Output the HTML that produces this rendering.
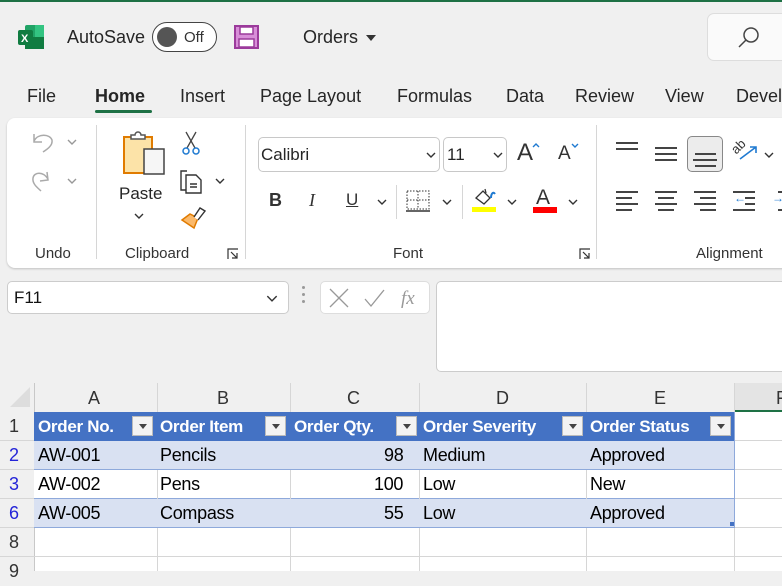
<!DOCTYPE html>
<html><head><meta charset="utf-8"><style>
*{margin:0;padding:0;box-sizing:border-box}
body{width:782px;height:571px;overflow:hidden;background:#f0f0f0;font-family:"Liberation Sans",sans-serif;color:#242424;position:relative}
.a{position:absolute;white-space:nowrap}
.t{font-size:18px;color:#262626}
.sm{font-size:15px;color:#333}
.cv{position:absolute}
.cell{position:absolute;font-size:18px;line-height:29px;color:#000;white-space:nowrap;letter-spacing:-0.3px}
.hd{position:absolute;font-size:17px;font-weight:bold;color:#fff;line-height:29px;white-space:nowrap;letter-spacing:-0.3px}
.dd{position:absolute;width:21px;height:20px;background:#f3f3f3;border:1px solid #bbb;top:416px}
.dd:after{content:"";position:absolute;left:6px;top:7px;border-left:4px solid transparent;border-right:4px solid transparent;border-top:5px solid #444}
.vl{position:absolute;width:1px;background:#d6d6d6}
.hl{position:absolute;height:1px;background:#d6d6d6}
.ln{position:absolute;height:2px;background:#444}
</style></head><body>
<svg width="0" height="0" style="position:absolute"><defs><symbol id="ch" viewBox="0 0 10 6"><path d="M1 1 L5 5 L9 1" fill="none" stroke="#333" stroke-width="1.4"/></symbol></defs></svg>
<div class="a" style="left:0;top:0;width:782px;height:2px;background:#1e7145"></div>
<svg class="a" style="left:18px;top:25px" width="26" height="24"><rect x="7" y="0" width="19" height="24" rx="2" fill="#21a366"/><rect x="7" y="12" width="19" height="12" fill="#107c41"/><rect x="17" y="0" width="9" height="12" fill="#33c481"/><rect x="0" y="5" width="15" height="15" rx="2" fill="#107c41"/><text x="3" y="17" font-size="11" font-weight="bold" fill="#fff" font-family="Liberation Sans">X</text></svg>
<div class="a t" style="left:67px;top:27px">AutoSave</div>
<div class="a" style="left:152px;top:22px;width:65px;height:30px;border:1.5px solid #444;border-radius:15px;background:#fff"></div>
<div class="a" style="left:157px;top:27px;width:20px;height:20px;border-radius:50%;background:#555"></div>
<div class="a sm" style="left:184px;top:29px">Off</div>
<svg class="a" style="left:234px;top:25px" width="25" height="24"><rect x="1" y="1" width="23" height="22" fill="#d88ed8" stroke="#9b3a9b" stroke-width="2"/><rect x="6" y="2" width="13" height="7" fill="#fff" stroke="#9b3a9b" stroke-width="1.5"/><rect x="5" y="14" width="15" height="8" fill="#fff" stroke="#9b3a9b" stroke-width="1.5"/></svg>
<div class="a t" style="left:303px;top:27px">Orders</div>
<div class="a" style="left:366px;top:35px;border-left:5px solid transparent;border-right:5px solid transparent;border-top:6px solid #333"></div>
<div class="a" style="left:707px;top:13px;width:90px;height:48px;background:#fafafa;border:1px solid #ddd;border-radius:7px"></div>
<svg class="a" style="left:738px;top:26px" width="22" height="22"><circle cx="13" cy="9" r="7" fill="none" stroke="#444" stroke-width="1.5"/><line x1="8" y1="14" x2="1" y2="21" stroke="#444" stroke-width="1.5"/></svg>
<div class="a t" style="left:27px;top:86px">File</div>
<div class="a t" style="left:95px;top:86px;font-weight:bold">Home</div>
<div class="a" style="left:95px;top:110px;width:57px;height:3px;background:#1e7145;border-radius:2px"></div>
<div class="a t" style="left:180px;top:86px">Insert</div>
<div class="a t" style="left:260px;top:86px">Page Layout</div>
<div class="a t" style="left:397px;top:86px">Formulas</div>
<div class="a t" style="left:506px;top:86px">Data</div>
<div class="a t" style="left:575px;top:86px">Review</div>
<div class="a t" style="left:665px;top:86px">View</div>
<div class="a t" style="left:736px;top:86px">Devel</div>
<div class="a" style="left:7px;top:118px;width:800px;height:150px;background:#fff;border-radius:8px;box-shadow:0 1px 2px rgba(0,0,0,.2)"></div>
<div class="vl" style="left:96px;top:125px;height:134px"></div>
<div class="vl" style="left:245px;top:125px;height:134px"></div>
<div class="vl" style="left:596px;top:125px;height:134px"></div>
<svg class="a" style="left:30px;top:128px" width="30" height="65" fill="none" stroke="#aaa" stroke-width="1.5"><path d="M4 6 L4 14 L12 14 M4 13 C8 5 20 6 22 12 C23 18 16 22 13 24"/><path d="M17 44 L18 52 L10 53 M18 51 C13 43 4 44 3 50 C2 56 8 60 11 63"/></svg>
<svg class="cv" style="left:67px;top:139px" width="10" height="6"><use href="#ch" style="opacity:.5"/></svg>
<svg class="cv" style="left:67px;top:178px" width="10" height="6"><use href="#ch" style="opacity:.5"/></svg>
<div class="a sm" style="left:35px;top:245px">Undo</div>
<svg class="a" style="left:121px;top:130px" width="46" height="46"><rect x="3" y="7" width="28" height="36" fill="#fce3a8" stroke="#e07b00" stroke-width="2"/><path d="M10 9 V5 H14 A3 3 0 0 1 20 5 H24 V9 Z" fill="#fff" stroke="#555" stroke-width="1.5"/><rect x="23" y="19" width="20" height="25" fill="#f6f6f6" stroke="#444" stroke-width="1.5"/></svg>
<div class="a t" style="left:119px;top:184px;font-size:17px">Paste</div>
<svg class="cv" style="left:134px;top:213px" width="10" height="6"><use href="#ch"/></svg>
<svg class="a" style="left:181px;top:131px" width="22" height="24" fill="none"><path d="M5 1 L14 17 M15 1 L6 17" stroke="#444" stroke-width="1.3"/><circle cx="5" cy="20" r="3" stroke="#1f7ad1" stroke-width="1.5"/><circle cx="15" cy="20" r="3" stroke="#1f7ad1" stroke-width="1.5"/></svg>
<svg class="a" style="left:179px;top:168px" width="26" height="26" fill="none" stroke="#333" stroke-width="1.4"><path d="M8 3 H2 V22 H7"/><path d="M7 7 H17 L22 12 V25 H7 Z"/><path d="M11 16 H18 M11 19 H18"/></svg>
<svg class="cv" style="left:215px;top:178px" width="10" height="6"><use href="#ch"/></svg>
<svg class="a" style="left:180px;top:206px" width="26" height="26"><path d="M2 14 L14 22 L18 12 L10 8 Z" fill="#fbb96a" stroke="#e07b00" stroke-width="1.5"/><path d="M14 11 L20 2 L25 5 L18 14" fill="#fff" stroke="#333" stroke-width="1.4"/></svg>
<div class="a sm" style="left:125px;top:245px">Clipboard</div>
<svg class="a" style="left:227px;top:248px" width="12" height="12" fill="none" stroke="#333" stroke-width="1.2"><path d="M1 11 V1 H11 M4 4 L10 10 M10 5 V10 H5"/></svg>
<div class="a" style="left:258px;top:137px;width:182px;height:35px;border:1px solid #c8c8c8;border-radius:5px"></div>
<div class="a t" style="left:261px;top:145px;font-size:17px">Calibri</div>
<svg class="cv" style="left:426px;top:152px" width="10" height="6"><use href="#ch"/></svg>
<div class="a" style="left:443px;top:137px;width:64px;height:35px;border:1px solid #c8c8c8;border-radius:5px"></div>
<div class="a t" style="left:447px;top:145px;font-size:17px">11</div>
<svg class="cv" style="left:493px;top:152px" width="10" height="6"><use href="#ch"/></svg>
<div class="a" style="left:517px;top:139px;font-size:24px;color:#333">A</div>
<svg class="cv" style="left:532px;top:143px" width="8" height="5"><path d="M1 4 L4 1 L7 4" fill="none" stroke="#1f7ad1" stroke-width="1.4"/></svg>
<div class="a" style="left:558px;top:143px;font-size:19px;color:#333">A</div>
<svg class="cv" style="left:571px;top:143px" width="8" height="5"><path d="M1 1 L4 4 L7 1" fill="none" stroke="#1f7ad1" stroke-width="1.4"/></svg>
<div class="a" style="left:269px;top:190px;font-size:18px;font-weight:bold;color:#333">B</div>
<div class="a" style="left:309px;top:190px;font-size:18px;font-style:italic;font-family:'Liberation Serif';color:#333">I</div>
<div class="a" style="left:346px;top:190px;font-size:17px;text-decoration:underline;color:#333">U</div>
<svg class="cv" style="left:377px;top:199px" width="10" height="6"><use href="#ch"/></svg>
<div class="vl" style="left:396px;top:185px;height:34px"></div>
<svg class="a" style="left:406px;top:190px" width="24" height="22" fill="none" stroke="#333" stroke-width="1" stroke-dasharray="1.5 1.5"><rect x="1" y="1" width="22" height="18"/><path d="M12 1 V19 M1 10 H23"/><path d="M0 21 H24" stroke-dasharray="none" stroke-width="1.5"/></svg>
<svg class="cv" style="left:442px;top:199px" width="10" height="6"><use href="#ch"/></svg>
<div class="vl" style="left:462px;top:185px;height:34px"></div>
<svg class="a" style="left:471px;top:188px" width="26" height="18" fill="none" stroke="#333" stroke-width="1.3"><path d="M5 10 L12 3 L19 10 L13 16 Z"/><path d="M14 1 L15 5"/><path d="M20 10 C20 6 22 3 24 6" stroke="#1f7ad1" stroke-width="2"/></svg>
<div class="a" style="left:472px;top:207px;width:24px;height:5px;background:#ffff00"></div>
<svg class="cv" style="left:507px;top:199px" width="10" height="6"><use href="#ch"/></svg>
<div class="a" style="left:536px;top:186px;font-size:21px;color:#333">A</div>
<div class="a" style="left:533px;top:207px;width:24px;height:6px;background:#f00"></div>
<svg class="cv" style="left:568px;top:199px" width="10" height="6"><use href="#ch"/></svg>
<div class="a sm" style="left:393px;top:245px">Font</div>
<svg class="a" style="left:579px;top:248px" width="12" height="12" fill="none" stroke="#333" stroke-width="1.2"><path d="M1 11 V1 H11 M4 4 L10 10 M10 5 V10 H5"/></svg>
<div class="ln" style="left:616px;top:142px;width:22px;height:1.5px"></div><div class="ln" style="left:616px;top:148px;width:22px;height:1.5px"></div>
<div class="ln" style="left:655px;top:147px;width:22px;height:1.5px"></div><div class="ln" style="left:655px;top:153px;width:22px;height:1.5px"></div><div class="ln" style="left:655px;top:159px;width:22px;height:1.5px"></div>
<div class="a" style="left:687px;top:136px;width:36px;height:36px;background:#ececec;border:1px solid #888;border-radius:5px"></div>
<div class="ln" style="left:695px;top:153px;width:21px;height:1.5px"></div><div class="ln" style="left:693px;top:159px;width:24px;height:1.5px"></div><div class="ln" style="left:695px;top:165px;width:21px;height:1.5px"></div>
<div class="a" style="left:731px;top:139px;font-size:13px;color:#333;transform:rotate(-45deg)">ab</div>
<svg class="a" style="left:738px;top:145px" width="20" height="16"><path d="M2 14 L18 2 M12 2 H18 V8" fill="none" stroke="#1f7ad1" stroke-width="1.6"/></svg>
<svg class="cv" style="left:764px;top:152px" width="10" height="6"><use href="#ch"/></svg>
<div class="ln" style="left:616px;top:191px;width:22px;height:1.5px"></div><div class="ln" style="left:616px;top:197px;width:16px;height:1.5px"></div><div class="ln" style="left:616px;top:203px;width:22px;height:1.5px"></div><div class="ln" style="left:616px;top:209px;width:16px;height:1.5px"></div>
<div class="ln" style="left:655px;top:191px;width:22px;height:1.5px"></div><div class="ln" style="left:658px;top:197px;width:16px;height:1.5px"></div><div class="ln" style="left:655px;top:203px;width:22px;height:1.5px"></div><div class="ln" style="left:658px;top:209px;width:16px;height:1.5px"></div>
<div class="ln" style="left:694px;top:191px;width:22px;height:1.5px"></div><div class="ln" style="left:700px;top:197px;width:16px;height:1.5px"></div><div class="ln" style="left:694px;top:203px;width:22px;height:1.5px"></div><div class="ln" style="left:700px;top:209px;width:16px;height:1.5px"></div>
<div class="ln" style="left:733px;top:191px;width:22px;height:1.5px"></div><div class="ln" style="left:745px;top:197px;width:10px;height:1.5px"></div><div class="ln" style="left:745px;top:203px;width:10px;height:1.5px"></div><div class="ln" style="left:733px;top:209px;width:22px;height:1.5px"></div>
<div class="a" style="left:734px;top:191px;font-size:12px;color:#1f7ad1">←</div>
<div class="a" style="left:772px;top:191px;font-size:12px;color:#1f7ad1">→</div>
<div class="ln" style="left:778px;top:191px;width:10px;height:1.5px"></div><div class="ln" style="left:778px;top:209px;width:10px;height:1.5px"></div>
<div class="a sm" style="left:696px;top:245px">Alignment</div>
<div class="a" style="left:7px;top:281px;width:282px;height:33px;background:#fff;border:1px solid #ccc;border-radius:5px"></div>
<div class="a t" style="left:14px;top:288px;font-size:17px;color:#111">F11</div>
<svg class="cv" style="left:266px;top:295px" width="12" height="7" viewBox="0 0 10 6"><path d="M1 1 L5 5 L9 1" fill="none" stroke="#333" stroke-width="1.2"/></svg>
<div class="a" style="left:302px;top:286px;width:3px;height:3px;background:#999;border-radius:50%"></div>
<div class="a" style="left:302px;top:293px;width:3px;height:3px;background:#999;border-radius:50%"></div>
<div class="a" style="left:302px;top:300px;width:3px;height:3px;background:#999;border-radius:50%"></div>
<div class="a" style="left:320px;top:281px;width:110px;height:33px;background:#fff;border:1px solid #ddd;border-radius:5px"></div>
<svg class="a" style="left:328px;top:287px" width="95" height="22" fill="none" stroke="#999" stroke-width="1.3"><path d="M2 2 L20 20 M20 2 L2 20"/><path d="M37 12 L43 19 L56 3"/><text x="73" y="17" font-size="19" font-style="italic" font-family="Liberation Serif" fill="#999" stroke="none">fx</text></svg>
<div class="a" style="left:436px;top:281px;width:360px;height:91px;background:#fff;border:1px solid #ccc;border-radius:5px"></div>
<div class="a" style="left:0;top:383px;width:782px;height:188px;background:#fff"></div>
<div class="a" style="left:0;top:383px;width:782px;height:29px;background:#f0f0f0"></div>
<div class="a" style="left:0;top:412px;width:34px;height:159px;background:#f0f0f0"></div>
<div class="a" style="left:10px;top:387px;border-left:20px solid transparent;border-bottom:20px solid #ddd"></div>
<div class="a" style="left:734px;top:383px;width:48px;height:29px;background:#e4e4e4;border-bottom:2px solid #1e7145"></div>
<div class="a" style="left:0;top:388px;width:782px;font-size:18px;color:#333">
<span class="a" style="left:88px">A</span><span class="a" style="left:217px">B</span><span class="a" style="left:347px">C</span><span class="a" style="left:496px">D</span><span class="a" style="left:654px">E</span><span class="a" style="left:776px">F</span></div>
<div class="vl" style="left:34px;top:383px;height:188px;background:#c8c8c8"></div>
<div class="vl" style="left:157px;top:383px;height:188px"></div>
<div class="vl" style="left:290px;top:383px;height:188px"></div>
<div class="vl" style="left:419px;top:383px;height:188px"></div>
<div class="vl" style="left:586px;top:383px;height:188px"></div>
<div class="vl" style="left:734px;top:383px;height:188px"></div>
<div class="hl" style="left:0;top:440px;width:782px"></div>
<div class="hl" style="left:0;top:469px;width:782px"></div>
<div class="hl" style="left:0;top:498px;width:782px"></div>
<div class="hl" style="left:0;top:527px;width:782px"></div>
<div class="hl" style="left:0;top:556px;width:782px"></div>
<div class="a" style="left:34px;top:412px;width:700px;height:29px;background:#4472c4"></div>
<div class="a" style="left:34px;top:441px;width:700px;height:29px;background:#d9e1f2;border-bottom:1px solid #8ea9db"></div>
<div class="a" style="left:34px;top:470px;width:700px;height:29px;background:#fff;border-bottom:1px solid #8ea9db"></div>
<div class="a" style="left:34px;top:499px;width:700px;height:29px;background:#d9e1f2;border-bottom:1px solid #8ea9db"></div>
<div class="vl" style="left:734px;top:412px;height:116px;background:#8ea9db"></div>
<div class="vl" style="left:290px;top:470px;height:29px"></div>
<div class="vl" style="left:419px;top:470px;height:29px"></div>
<div class="vl" style="left:157px;top:470px;height:29px"></div>
<div class="vl" style="left:586px;top:470px;height:29px"></div>
<div class="hd" style="left:38px;top:412px">Order No.</div><div class="dd" style="left:132px"></div>
<div class="hd" style="left:160px;top:412px">Order Item</div><div class="dd" style="left:265px"></div>
<div class="hd" style="left:294px;top:412px">Order Qty.</div><div class="dd" style="left:396px"></div>
<div class="hd" style="left:423px;top:412px">Order Severity</div><div class="dd" style="left:562px"></div>
<div class="hd" style="left:590px;top:412px">Order Status</div><div class="dd" style="left:710px"></div>
<div class="cell" style="left:38px;top:441px">AW-001</div><div class="cell" style="left:160px;top:441px">Pencils</div><div class="cell" style="left:384px;top:441px">98</div><div class="cell" style="left:423px;top:441px">Medium</div><div class="cell" style="left:590px;top:441px">Approved</div>
<div class="cell" style="left:38px;top:470px">AW-002</div><div class="cell" style="left:160px;top:470px">Pens</div><div class="cell" style="left:374px;top:470px">100</div><div class="cell" style="left:423px;top:470px">Low</div><div class="cell" style="left:590px;top:470px">New</div>
<div class="cell" style="left:38px;top:499px">AW-005</div><div class="cell" style="left:160px;top:499px">Compass</div><div class="cell" style="left:384px;top:499px">55</div><div class="cell" style="left:423px;top:499px">Low</div><div class="cell" style="left:590px;top:499px">Approved</div>
<div class="a" style="left:730px;top:522px;width:4px;height:4px;background:#4472c4"></div>
<div class="cell" style="left:9px;top:412px;color:#333">1</div>
<div class="cell" style="left:9px;top:441px;color:#2424d8">2</div>
<div class="cell" style="left:9px;top:470px;color:#2424d8">3</div>
<div class="cell" style="left:9px;top:499px;color:#2424d8">6</div>
<div class="cell" style="left:9px;top:528px;color:#333">8</div>
<div class="cell" style="left:9px;top:557px;color:#333">9</div>
</body></html>
